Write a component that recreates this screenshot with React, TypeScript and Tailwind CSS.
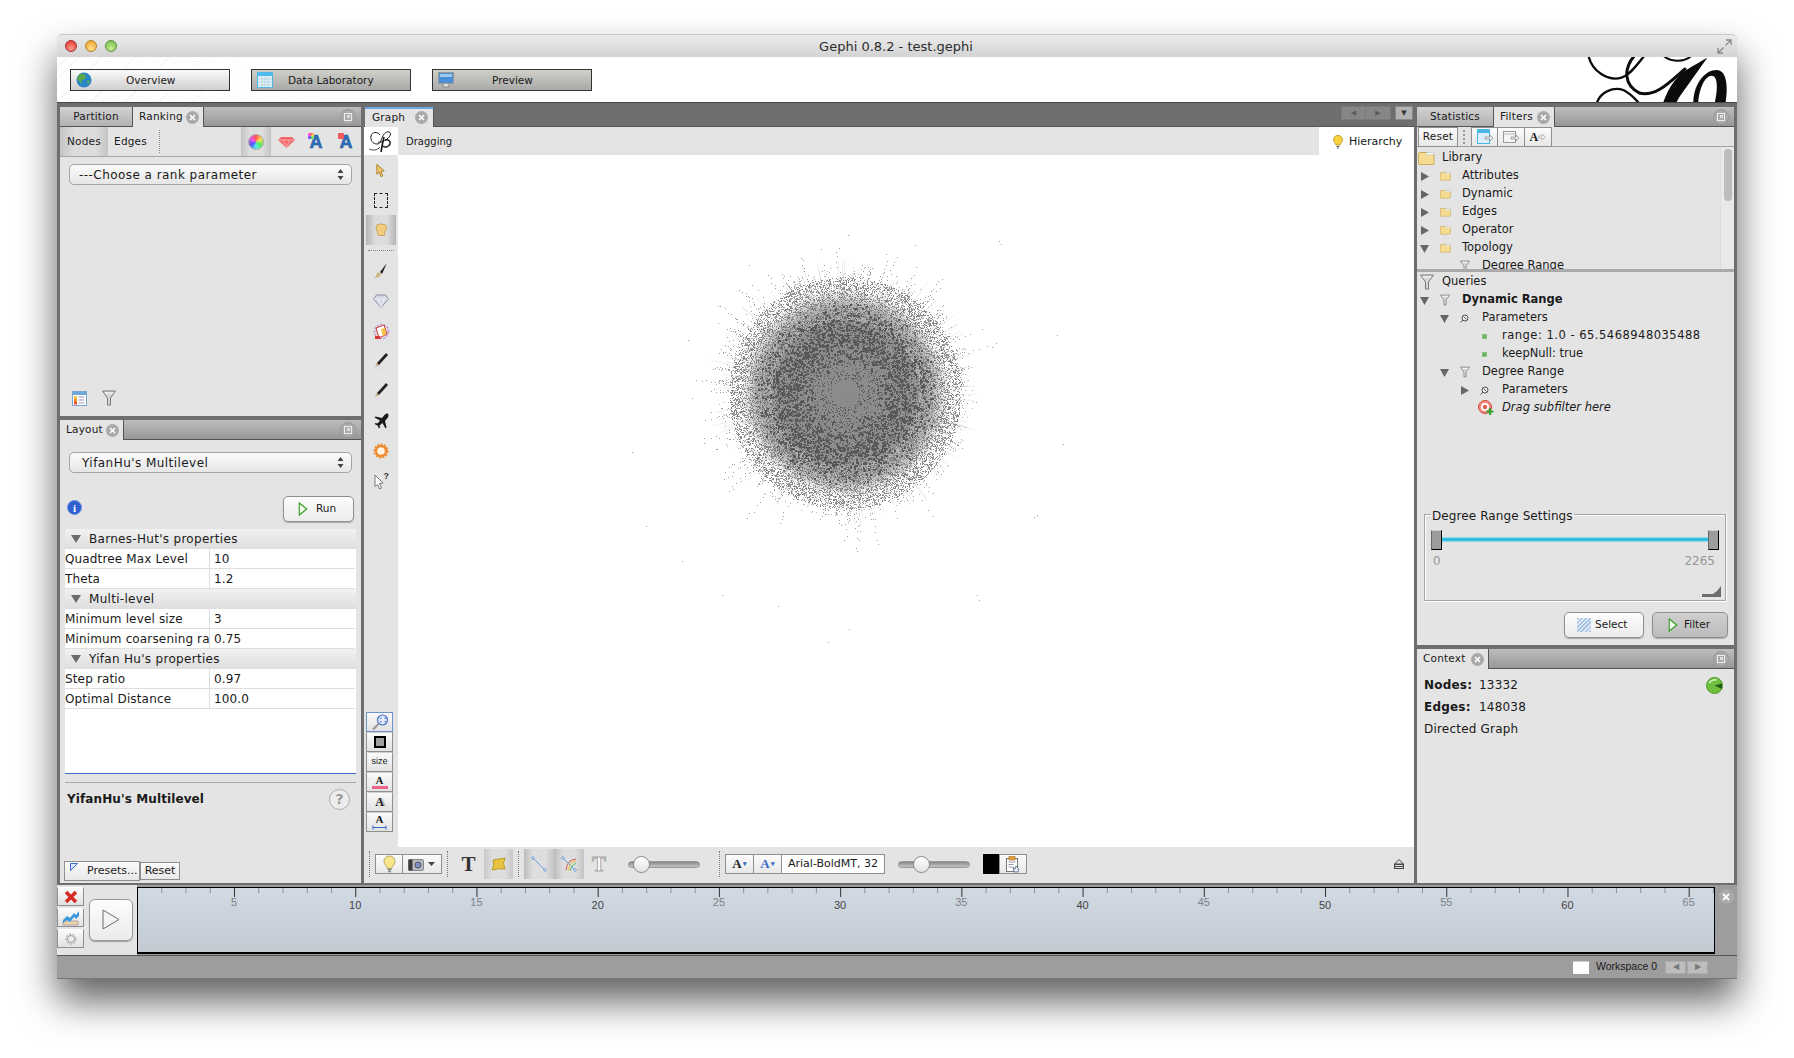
import React, { useMemo } from "react";

function rng(seed: number) {
  return () => {
    seed |= 0; seed = (seed + 0x6d2b79f5) | 0;
    let t = Math.imul(seed ^ (seed >>> 15), 1 | seed);
    t = (t + Math.imul(t ^ (t >>> 7), 61 | t)) ^ t;
    return ((t ^ (t >>> 14)) >>> 0) / 4294967296;
  };
}

function Cluster() {
  const data = useMemo(() => {
    const r = rng(42);
    const cx = 447, cy = 238;
    const px = (x: number, y: number, s = 1) => `M${Math.round(x)} ${Math.round(y)}h${s}v${s}h-${s}z`;
    let edges = "", mid = "", dark = "", light = "", spike = "", fringe = "";
    for (let i = 0; i < 1300; i++) {
      const a = r() * 6.283, r0 = 55 + r() * 35, r1 = 85 + r() * r() * 55;
      edges += `M${(cx + Math.cos(a) * r0).toFixed(1)} ${(cy + Math.sin(a) * r0).toFixed(1)}L${(cx + Math.cos(a) * r1).toFixed(1)} ${(cy + Math.sin(a) * r1).toFixed(1)}`;
    }
    for (let i = 0; i < 15000; i++) {
      const a = r() * 6.283, d = 116 * Math.pow(r(), 0.6);
      mid += px(cx + Math.cos(a) * d, cy + Math.sin(a) * d);
    }
    for (let i = 0; i < 5600; i++) {
      const a = r() * 6.283, d = 28 + (r() + r()) / 2 * 66;
      dark += px(cx + Math.cos(a) * d, cy + Math.sin(a) * d, r() > 0.7 ? 2 : 1);
    }
    for (let i = 0; i < 500; i++) {
      const a = r() * 6.283, d = 14 + r() * 22;
      dark += px(cx + Math.cos(a) * d, cy + Math.sin(a) * d);
    }
    for (let i = 0; i < 2600; i++) {
      const a = r() * 6.283, d = 78 + r() * r() * 42;
      fringe += px(cx + Math.cos(a) * d, cy + Math.sin(a) * d);
    }
    for (let i = 0; i < 6000; i++) {
      const a = r() * 6.283, d = 74 + r() * r() * 56;
      light += px(cx + Math.cos(a) * d, cy + Math.sin(a) * d);
    }
    for (let i = 0; i < 170; i++) {
      const a = r() * 6.283, n = 4 + Math.floor(r() * 9), st = 96 + r() * 16, len = 10 + r() * r() * 58;
      for (let j = 0; j < n; j++) {
        const d = st + (j / n) * len + r() * 3, b = a + (r() - 0.5) * 0.025;
        spike += px(cx + Math.cos(b) * d, cy + Math.sin(b) * d);
      }
    }
    const out = [[873,211],[875,213],[924,293],[929,388],[904,452],[906,450],[854,520],[856,524],[742,550],[724,561],[680,530],[631,520],[596,490],[565,460],[552,395],[601,297],[605,348],[741,205],[655,232],[800,214],[718,218]];
    let outliers = "";
    out.forEach(([x, y]) => { outliers += px(x * 1.1441 - 398, y * 1.1441 - 155); });
    return { edges, mid, dark, light, spike, outliers, fringe, cx, cy };
  }, []);
  return (
    <svg className="w-full h-full block" viewBox="0 0 1016 692" preserveAspectRatio="xMinYMin slice" shapeRendering="crispEdges">
      <defs>
        <radialGradient id="core">
          <stop offset="0" stopColor="#8c8c8c" />
          <stop offset="0.68" stopColor="#8e8e8e" />
          <stop offset="0.84" stopColor="#a6a6a6" stopOpacity="0.8" />
          <stop offset="1" stopColor="#c4c4c4" stopOpacity="0" />
        </radialGradient>
      </defs>
      <circle cx={data.cx} cy={data.cy} r={104} fill="url(#core)" shapeRendering="auto" />
      <path d={data.edges} stroke="#b0b0b0" strokeWidth={0.5} fill="none" opacity={0.4} shapeRendering="auto" />
      <path d={data.light} fill="#b4b4b4" />
      <path d={data.mid} fill="#8a8a8a" />
      <path d={data.fringe} fill="#7c7c7c" />
      <path d={data.spike} fill="#a0a0a0" />
      <path d={data.dark} fill="#585858" />
      <path d={data.outliers} fill="#a0a0a0" />
    </svg>
  );
}

const Close = () => (
  <span className="w-[13px] h-[13px] rounded-full bg-[#a9a9a9] flex items-center justify-center shrink-0">
    <svg width="7" height="7" viewBox="0 0 7 7"><path d="M1 1l5 5M6 1l-5 5" stroke="#fff" strokeWidth="1.6" /></svg>
  </span>
);

const Maxi = () => (
  <span className="w-[16px] h-[16px] rounded-full bg-[#a9a9a9] border border-[#989898] flex items-center justify-center">
    <span className="w-[8px] h-[8px] border border-[#eee] flex items-center justify-center"><span className="w-[3px] h-[3px] bg-[#ddd]" /></span>
  </span>
);

function TabBar({ children }: { children: React.ReactNode }) {
  return (
    <div className="h-[19px] shrink-0 flex items-stretch bg-[linear-gradient(#bdbdbd,#979797)] border-b border-[#555] box-content relative text-[10.500px] tracking-[0.2px]">
      {children}
      <div className="ml-auto mr-[5px] self-center"><Maxi /></div>
    </div>
  );
}

function ActiveTab({ label, w }: { label: string; w: string }) {
  return (
    <div className={`${w} bg-[#e4e4e4] border-r border-[#555] flex items-center justify-between pl-[6px] pr-[4px] -mb-px`}>
      <span>{label}</span><Close />
    </div>
  );
}

function IdleTab({ label, w }: { label: string; w: string }) {
  return (
    <div className={`${w} bg-[linear-gradient(#d2d2d2,#b2b2b2)] border-r border-[#555] flex items-center justify-center`}>{label}</div>
  );
}

function Select({ label, cls }: { label: string; cls: string }) {
  return (
    <div className={`h-[21px] border border-[#a5a5a5] rounded-[5px] bg-[linear-gradient(#fbfbfb,#e6e6e6)] flex items-center justify-between pr-[7px] text-[12px] tracking-[0.45px] ${cls}`}>
      <span>{label}</span>
      <svg width="7" height="13" viewBox="0 0 7 13"><path d="M3.5 1L6.5 5H.5zM3.5 12L.5 8h6z" fill="#444" /></svg>
    </div>
  );
}

const Tri = ({ open, size = 9 }: { open?: boolean; size?: number }) => (
  <svg width={size} height={size} viewBox="0 0 9 9" className="shrink-0">
    {open ? <path d="M0 1h9L4.5 9z" fill="#666" /> : <path d="M1 0l8 4.5L1 9z" fill="#666" />}
  </svg>
);

const Folder = ({ big }: { big?: boolean }) => (
  <svg width={big ? 17 : 11} height={big ? 14 : 10} viewBox="0 0 17 14" className="shrink-0">
    <path d="M.5 2.5q0-1 1-1h13q1.500 0 1.500 1.500v9.500q0 1-1 1h-13.500q-1 0-1-1z" fill="#f6dc92" stroke="#c9a95a" />
    <path d="M9 1.500h7v2H8z" fill="#fff" stroke="#a8c5e0" strokeWidth=".5" />
  </svg>
);

const Funnel = ({ big }: { big?: boolean }) => (
  <svg width={big ? 14 : 10} height={big ? 16 : 12} viewBox="0 0 14 16" className="shrink-0">
    <path d="M.5 1h13L8.500 8v7h-3V8z" fill="#d6d6d6" stroke="#7a7a7a" />
    <path d="M3 3h8" stroke="#fff" />
  </svg>
);

const Wrench = () => (
  <svg width="9" height="9" viewBox="0 0 9 9" className="shrink-0"><circle cx="5" cy="4" r="3" fill="#eee" stroke="#555" /><path d="M3 6L.5 8.500M3.500 2.500l3 3" stroke="#555" /></svg>
);

const Leaf = () => <span className="w-[5px] h-[5px] ml-[2px] bg-[#69b55d] border border-[#8ac482] shrink-0" />;

const pad = ["pl-[3px]", "pl-[23px]", "pl-[43px]"];

function Row({ level = 0, arrow, open, icon, children, cls = "" }: { level?: number; arrow?: boolean; open?: boolean; icon?: React.ReactNode; children: React.ReactNode; cls?: string }) {
  return (
    <div className={`h-[18px] flex items-center whitespace-nowrap text-[11.500px] ${pad[level]} ${cls}`}>
      <span className="w-[20px] shrink-0 flex items-center">{arrow && <Tri open={open} />}</span>
      <span className="w-[22px] shrink-0 flex items-center">{icon}</span>
      <span>{children}</span>
    </div>
  );
}

function PropHead({ label }: { label: string }) {
  return (
    <div className="h-[20px] bg-[linear-gradient(#f1f1f1,#dedede)] flex items-center pl-[6px] gap-[8px] tracking-[0.3px]">
      <svg width="10" height="8" viewBox="0 0 10 8"><path d="M0 0h10L5 8z" fill="#6d6d6d" /></svg>
      <span>{label}</span>
    </div>
  );
}

function PropRow({ k, v }: { k: string; v: string }) {
  return (
    <div className="h-[20px] grid grid-cols-[145px_1fr] bg-white border-b border-[#dedede] mr-[1px] tracking-[0.15px]">
      <div className="border-r border-[#dedede] overflow-hidden whitespace-nowrap leading-[20px]">{k}</div>
      <div className="pl-[4px] leading-[20px]">{v}</div>
    </div>
  );
}

function MacBtn({ children, cls }: { children: React.ReactNode; cls: string }) {
  return <div className={`rounded-[5px] border border-[#8f8f8f] shadow-[0_1px_1px_rgba(0,0,0,0.25)] flex items-center ${cls}`}>{children}</div>;
}

const PlayGreen = () => (
  <svg width="10" height="14" viewBox="0 0 12 15" preserveAspectRatio="none"><path d="M1.500 1l9 6.500-9 6.500z" fill="#f4faf0" stroke="#2f9a1c" strokeWidth="1.300" /></svg>
);

const Pencil = () => (
  <svg width="16" height="18" viewBox="0 0 16 18">
    <path d="M13 1l2 2-9 10-3.500 1.500L4 11z" fill="#222" />
    <path d="M4 11l2 2-3.500 1.500z" fill="#e8c58c" />
    <path d="M1 17h13" stroke="#ddd" />
  </svg>
);

const Brush = () => (
  <svg width="16" height="18" viewBox="0 0 16 18">
    <path d="M14 1L7 10l2 2z" fill="#222" />
    <path d="M6 10.500c-2 .5-3 2-2.500 3-.5 1-1.500 1.500-3 2 3 .5 6 0 7.500-3z" fill="#c9b27a" />
    <path d="M1 17h13" stroke="#ddd" />
  </svg>
);

function ToolCol() {
  return (
    <div className="w-[34px] shrink-0 flex flex-col items-center bg-[#e4e4e4] relative">
      <div className="h-[28px] w-full bg-white flex items-center justify-center">
        <svg width="26" height="25" viewBox="0 0 26 25" fill="none" stroke="#1a1a1a" strokeWidth="1">
          <path d="M12 6C9 2 4 3 3 7c-1 4 2 8 6 8 3 0 4-3 5-6 1-3 4-7 7-6 3 1 1 5-2 7-3 2-7 4-9 3" />
          <path d="M16 8c-1 4-2 9-3 15" strokeWidth="1.600" />
          <path d="M17 11c3-1 6 1 5 4s-5 4-7 2" strokeWidth="1.500" />
          <path d="M1 20c4 2 9 1 11-2" strokeWidth=".8" />
        </svg>
      </div>
      <div className="h-[30px] flex items-center justify-center">
        <svg width="10" height="15" viewBox="0 0 12 17"><path d="M1 1l9 8-4 .5L8 15l-2 1-2-5.500L1 13z" fill="#f0c566" stroke="#a07a25" /></svg>
      </div>
      <div className="h-[30px] flex items-center justify-center">
        <span className="w-[14px] h-[15px] border border-dashed border-[#222] rounded-[1px]" />
      </div>
      <div className="h-[30px] w-[30px] flex items-center justify-center bg-[linear-gradient(90deg,#b4b4b4,#dcdcdc_30%,#dcdcdc_70%,#b4b4b4)]">
        <svg width="14" height="14" viewBox="0 0 14 14"><path d="M2 3q1-2 3-1.500Q7 0 9 1.500q3-.5 3.500 2 .5 3-1.500 5l-.5 4H4L3.500 9Q2 7 2 3z" fill="#f2cd7e" stroke="#b0883a" strokeWidth=".6" /></svg>
      </div>
      <div className="w-[26px] border-t border-dotted border-[#888] mt-[5px] mb-[5px]" />
      <div className="h-[30px] flex items-center justify-center"><Brush /></div>
      <div className="h-[30px] flex items-center justify-center">
        <svg width="16" height="14" viewBox="0 0 16 14"><path d="M3.500 1h9L15.500 5 8 13.500.5 5z" fill="#d3d8e4" stroke="#8b8fa0" /><path d="M1 5h14M5 5l3 8 3-8" stroke="#f5f5f5" strokeWidth=".8" fill="none" /></svg>
      </div>
      <div className="h-[30px] flex items-center justify-center">
        <svg width="17" height="17" viewBox="0 0 17 17">
          <circle cx="8.500" cy="8.500" r="7" fill="none" stroke="#c8a0d8" strokeWidth="2" strokeDasharray="2 1.500" />
          <path d="M3 5l8-3 3 9-8 4z" fill="#fff" stroke="#c33" />
          <path d="M8 6l4-1 1 6-3 2z" fill="#f4c13e" />
          <path d="M2 13h5v3H2z" fill="#d33" />
        </svg>
      </div>
      <div className="h-[30px] flex items-center justify-center"><Pencil /></div>
      <div className="h-[30px] flex items-center justify-center"><Pencil /></div>
      <div className="h-[30px] flex items-center justify-center">
        <svg width="15" height="16" viewBox="0 0 15 16"><path d="M14 1c-1-1-2.500 0-3.500 1L8 5 1.500 3.500.5 4.500 6 7.500 3.500 10.500 1.500 10l-1 1 3 1.500 1.500 3 1-1-.5-2L8.500 10l3 5.500 1-1L11 8l2.500-3c1-1 1.500-3 .5-4z" fill="#1a1a1a" /></svg>
      </div>
      <div className="h-[30px] flex items-center justify-center">
        <svg width="16" height="16" viewBox="0 0 16 16"><circle cx="8" cy="8" r="5" fill="#fff2e0" stroke="#f08a2c" strokeWidth="2.400" /><circle cx="8" cy="8" r="6.800" fill="none" stroke="#f08a2c" strokeWidth="1.500" strokeDasharray="2 1.500" /></svg>
      </div>
      <div className="h-[30px] flex items-center justify-center">
        <svg width="15" height="18" viewBox="0 0 15 18"><path d="M1 3l8 8-3.500.5L7.500 16l-2 1-2-4.500L1 14.500z" fill="#fff" stroke="#777" /><text x="9.500" y="7" fontSize="9" fontWeight="700" fill="#333" fontFamily="'Liberation Sans',sans-serif">?</text></svg>
      </div>
      <div className="flex-1" />
      <div className="flex flex-col mb-[15px] w-[27px] mr-[3px]">
        <SmallTool active><svg width="18" height="17" viewBox="0 0 18 17"><circle cx="11.500" cy="6" r="5" fill="#dfe9fb" stroke="#4a72c4" strokeWidth="1.200" /><path d="M8 9.500L2 15.500" stroke="#999" strokeWidth="2.200" /><path d="M9.500 5V4h1M13.500 4h1v1M14.500 7v1h-1M10.500 8h-1V7" stroke="#3a5eb0" fill="none" strokeWidth=".8" /></svg></SmallTool>
        <SmallTool><span className="w-[12px] h-[12px] border-2 border-black bg-[#a0a0a0] block" /></SmallTool>
        <SmallTool><span className="text-[9px] font-['Liberation_Sans',sans-serif]">size</span></SmallTool>
        <SmallTool><div className="flex flex-col items-center leading-[10px]"><span className="font-['Liberation_Serif',serif] text-[11px] font-bold leading-[11px]">A</span><span className="w-[16px] h-[3px] bg-[#ec6488]" /></div></SmallTool>
        <SmallTool><span className="font-['Liberation_Serif',serif] text-[12px] font-bold [text-shadow:2px_0_1px_#bbb]">A</span></SmallTool>
        <SmallTool><div className="flex flex-col items-center"><span className="font-['Liberation_Serif',serif] text-[11px] font-bold leading-[11px]">A</span><svg width="15" height="5" viewBox="0 0 15 5"><path d="M1 2.500h13M1 .5v4M14 .5v4" stroke="#3767c9" /></svg></div></SmallTool>
      </div>
    </div>
  );
}

function SmallTool({ children, active }: { children: React.ReactNode; active?: boolean }) {
  return <div className={`h-[20px] border ${active ? "border-[#6d93c9]" : "border-[#8f8f8f] border-t-[#cfcfcf]"} bg-[linear-gradient(#fafafa,#e2e2e2)] flex items-center justify-center`}>{children}</div>;
}

const VDots = ({ cls = "" }: { cls?: string }) => <span className={`h-[26px] border-l border-dotted border-[#777] ${cls}`} />;

function Slider({ pos }: { pos: string }) {
  return (
    <div className="w-[72px] h-[7px] rounded-full bg-[linear-gradient(#888,#c6c6c6)] border border-[#999] relative">
      <span className={`absolute top-[-6px] w-[17px] h-[17px] rounded-full border border-[#888] bg-[linear-gradient(#fff,#e2e2e2)] ${pos}`} />
    </div>
  );
}

function BoxBtn({ children, cls = "" }: { children: React.ReactNode; cls?: string }) {
  return <div className={`h-[20px] border border-[#8f8f8f] bg-[linear-gradient(#fbfbfb,#e8e8e8)] flex items-center justify-center ${cls}`}>{children}</div>;
}

function BottomBar() {
  return (
    <div className="h-[36px] shrink-0 bg-[#e4e4e4] flex items-center pl-[5px] pb-[2px] text-[11px]">
      <VDots />
      <BoxBtn cls="w-[28px] ml-[5px]">
        <svg width="13" height="18" viewBox="0 0 13 18"><path d="M6.500 1C3 1 1 3.500 1 6.500c0 2.500 2.500 4 3.500 7h4c1-3 3.500-4.500 3.500-7C12 3.500 10 1 6.500 1z" fill="#f7e58a" stroke="#b9a969" /><path d="M4.500 14.500h4M5 16.500h3" stroke="#888" strokeWidth="1.300" /></svg>
      </BoxBtn>
      <BoxBtn cls="w-[39px] border-l-0 gap-[4px] pr-[1px]">
        <svg width="16" height="13" viewBox="0 0 16 13"><rect x=".5" y="1.500" width="15" height="11" rx="1" fill="#b9b9c2" stroke="#888" /><rect x=".5" y="1.500" width="4" height="11" fill="#3a3a3a" /><circle cx="10" cy="7" r="3" fill="#7a8fc4" stroke="#555" /></svg>
        <svg width="7" height="4" viewBox="0 0 7 4"><path d="M0 0h7L3.500 4z" fill="#444" /></svg>
      </BoxBtn>
      <VDots cls="ml-[5px]" />
      <span className="w-[36px] pl-[5px] flex justify-center font-['Liberation_Serif',serif] font-bold text-[21px] leading-none text-[#333]">T</span>
      <span className="w-[29px] h-[30px] bg-[linear-gradient(90deg,#c8c8c8,#dedede_30%,#dedede_70%,#c8c8c8)] flex items-center justify-center">
        <svg width="17" height="15" viewBox="0 0 17 15"><path d="M3 3q6-1 12-2-3 5 0 11-6-1-13 1 3-5 1-10z" fill="#e8c43e" stroke="#b99b2a" /></svg>
      </span>
      <VDots cls="ml-[5px]" />
      <span className="ml-[5px] w-[30px] h-[30px] bg-[linear-gradient(90deg,#bcbcbc,#dedede_30%,#dedede_70%,#c4c4c4)] flex items-center justify-center">
        <svg width="16" height="16" viewBox="0 0 16 16"><path d="M2 2l12 12" stroke="#6fa0d8" /><circle cx="2" cy="2" r="1.300" fill="#fff" stroke="#6fa0d8" /><circle cx="14" cy="14" r="1.300" fill="#fff" stroke="#6fa0d8" /></svg>
      </span>
      <span className="w-[30px] h-[30px] bg-[linear-gradient(90deg,#bcbcbc,#dedede_30%,#dedede_70%,#c4c4c4)] flex items-center justify-center">
        <svg width="16" height="16" viewBox="0 0 16 16"><path d="M5 14Q6 4 15 3" stroke="#d8574a" fill="none" strokeWidth="1" /><path d="M7 15Q8 6 15 5" stroke="#e9c43c" fill="none" strokeWidth="1" /><path d="M9 15q1-6 6-8" stroke="#5fb85a" fill="none" strokeWidth="1" /><path d="M2 2l12 12" stroke="#6fa0d8" /><circle cx="2" cy="2" r="1.300" fill="#fff" stroke="#6fa0d8" /><circle cx="14" cy="14" r="1.300" fill="#fff" stroke="#6fa0d8" /></svg>
      </span>
      <span className="w-[30px] flex justify-center font-['Liberation_Serif',serif] font-bold text-[21px] leading-none text-white [-webkit-text-stroke:1px_#aaa]">T</span>
      <div className="ml-[14px]"><Slider pos="left-[4px]" /></div>
      <VDots cls="ml-[19px]" />
      <BoxBtn cls="w-[29px] ml-[5px] font-['Liberation_Serif',serif] font-bold text-[13px]">A<span className="text-[7px] text-[#3767c9] ml-[1px]">▾</span></BoxBtn>
      <BoxBtn cls="w-[28px] border-l-0 font-['Liberation_Serif',serif] font-bold text-[13px] text-[#3767c9]">A<span className="text-[7px] ml-[1px]">▾</span></BoxBtn>
      <BoxBtn cls="w-[103px] border-l-0 bg-[linear-gradient(#fff,#fff)] whitespace-nowrap text-[11px]">Arial-BoldMT, 32</BoxBtn>
      <div className="ml-[13px]"><Slider pos="left-[14px]" /></div>
      <span className="w-[16px] h-[20px] bg-black ml-[13px]" />
      <BoxBtn cls="w-[28px]">
        <svg width="16" height="17" viewBox="0 0 16 17"><rect x="1.500" y="2.500" width="11" height="13" fill="#fff" stroke="#777" /><rect x="4" y=".5" width="6" height="3.500" fill="#e8a43c" stroke="#a06a20" strokeWidth=".6" /><path d="M3.500 6h7M3.500 8.500h5M3.500 11h4" stroke="#99a" /><path d="M9 16l-1-5 2 2 1-3 3 3-1 3z" fill="#dfe8f8" stroke="#456" strokeWidth=".7" /></svg>
      </BoxBtn>
      <div className="ml-auto mr-[10px]">
        <svg width="10" height="10" viewBox="0 0 10 10"><path d="M5 .5L9.500 5H.5z" fill="none" stroke="#444" /><rect x=".5" y="5.500" width="9" height="4" fill="none" stroke="#444" /><path d="M1 7.500h8" stroke="#444" /></svg>
      </div>
    </div>
  );
}

function Ruler() {
  const ticks = [];
  for (let v = 2; v <= 66; v++) {
    const x = 96.5 + (v - 5) * 24.245;
    const major = v % 5 === 0;
    ticks.push(<line key={v} x1={x} x2={x} y1={0} y2={major ? 9 : 5} stroke={major ? "#333" : "#8a8f98"} />);
    if (major) {
      const ten = v % 10 === 0;
      ticks.push(<text key={`t${v}`} x={x - 0.5} y={ten ? 21 : 18} textAnchor="middle" fontSize={11} fill={ten ? "#444" : "#7d838c"} fontFamily="'Liberation Sans',sans-serif">{v}</text>);
    }
  }
  return (
    <svg className="block" width="1576" height="63">{ticks}</svg>
  );
}

export default function App() {
  return (
    <div className="w-[1794px] h-[1058px] bg-white overflow-hidden pt-[34px] pl-[57px] font-['DejaVu_Sans',sans-serif] text-[12px] text-[#1a1a1a]">
      <div className="w-[1680px] h-[945px] flex flex-col rounded-t-[5px] shadow-[0_22px_38px_rgba(0,0,0,0.62)]">
        <div className="h-[23px] shrink-0 rounded-t-[5px] bg-[linear-gradient(#ebebeb,#d3d3d3)] border-t border-[#c8c8c8] flex items-center pl-[8px] pr-[5px] relative">
          <div className="flex gap-[8px]">
            <span className="w-[12px] h-[12px] rounded-full border border-[#a33] bg-[radial-gradient(circle_at_50%_75%,#ff9c8c,#dd2b25)]" />
            <span className="w-[12px] h-[12px] rounded-full border border-[#b7832c] bg-[radial-gradient(circle_at_50%_75%,#ffe08a,#e89a22)]" />
            <span className="w-[12px] h-[12px] rounded-full border border-[#5d9141] bg-[radial-gradient(circle_at_50%_75%,#c9ee95,#6bb63f)]" />
          </div>
          <div className="flex-1 text-center text-[13px] text-[#2b2b2b] pr-[42px] pt-[1px]">Gephi 0.8.2 - test.gephi</div>
          <svg width="15" height="15" viewBox="0 0 15 15"><path d="M9 1h5v5M14 1L8.500 6.500" stroke="#888" fill="none" strokeWidth="1.300" /><path d="M6 14H1V9M1 14l5.500-5.500" stroke="#888" fill="none" strokeWidth="1.300" /></svg>
        </div>

        <div className="h-[45px] shrink-0 flex items-center pl-[13px] gap-[21px] relative overflow-hidden bg-[linear-gradient(90deg,rgba(255,255,255,0),#fff_16%),repeating-linear-gradient(135deg,#fff,#fff_7px,#e9e9e9_8px)] text-[10.500px]">
          <div className="w-[160px] h-[22px] border border-[#333] bg-[linear-gradient(#fafafa,#cfcfcf)] flex items-center relative">
            <svg className="ml-[5px]" width="16" height="16" viewBox="0 0 16 16"><circle cx="8" cy="8" r="7.500" fill="#2a86c8" /><path d="M4 2q4-1 6 2l-1 3-3 1-1 4-2-3-2-2q0-3 3-5z" fill="#59a84e" /><path d="M11 8l3 1-2 4z" fill="#59a84e" /></svg>
            <span className="absolute left-[55px] top-[3px]">Overview</span>
          </div>
          <div className="w-[160px] h-[22px] border border-[#333] bg-[linear-gradient(#d0d0c8,#a9a9a9)] flex items-center relative">
            <svg className="ml-[5px]" width="16" height="16" viewBox="0 0 16 16"><rect x=".5" y=".5" width="15" height="15" fill="#dff1fb" stroke="#54b7e8" /><rect x="1" y="1" width="14" height="3" fill="#4dbbef" /><path d="M1 7h14M1 10h14M1 13h14M5 4v11M8 4v11M11 4v11" stroke="#b6cfdc" strokeWidth=".7" /></svg>
            <span className="absolute left-[36px] top-[3px]">Data Laboratory</span>
          </div>
          <div className="w-[160px] h-[22px] border border-[#333] bg-[linear-gradient(#d0d0c8,#a9a9a9)] flex items-center relative">
            <svg className="ml-[5px]" width="16" height="16" viewBox="0 0 16 16"><rect x=".5" y=".5" width="15" height="11" fill="#4a8fd6" stroke="#9a9a9a" /><rect x="2" y="2" width="12" height="3" fill="#9ac8f0" /><path d="M5 12v3h6v-3" fill="#ddd" stroke="#888" /></svg>
            <span className="absolute left-[59px] top-[3px]">Preview</span>
          </div>
          <svg className="absolute right-0 top-0" width="157" height="45" viewBox="0 6 471 135">
            <g fill="none" stroke="#0b0b0b" strokeLinecap="round">
              <path d="M25 0C35 50 85 80 125 68C150 60 170 30 192 4" strokeWidth="7" />
              <path d="M165 0C130 40 130 90 180 115C230 125 270 80 315 42" strokeWidth="9" />
              <path d="M250 2C270 20 310 25 335 2" strokeWidth="6" />
              <path d="M50 146C60 110 100 95 130 105C150 115 165 130 178 146" strokeWidth="7" />
            </g>
            <path d="M250 141C265 100 285 70 310 50C330 38 360 20 382 8C370 25 345 60 320 95C305 115 295 130 290 141Z" fill="#0b0b0b" />
            <path d="M340 141C342 85 375 45 410 45C440 45 445 95 437 141L405 141C415 95 412 62 395 62C375 62 358 100 355 141Z" fill="#0b0b0b" />
          </svg>
        </div>

        <div className="h-[783px] shrink-0 bg-[#6e6e6e] border-t border-[#444] flex pt-[4px] pb-[2px] px-[3px]">
          <div className="w-[301px] shrink-0 flex flex-col gap-[4px]">
            <section className="h-[309px] bg-[#e4e4e4] flex flex-col">
              <TabBar>
                <IdleTab label="Partition" w="w-[73px]" />
                <ActiveTab label="Ranking" w="w-[71px]" />
              </TabBar>
              <div className="h-[30px] flex items-stretch border-b border-[#a8a8a8] text-[10.500px] tracking-[0.2px]">
                <div className="w-[48px] flex items-center justify-center bg-[linear-gradient(90deg,#c4c4c4,#dcdcdc_30%,#dcdcdc_75%,#c4c4c4)]">Nodes</div>
                <div className="w-[45px] flex items-center justify-center">Edges</div>
                <span className="my-[3px] ml-[6px] border-l border-dotted border-[#888]" />
                <div className="ml-[81px] w-[30px] flex items-center justify-center bg-[linear-gradient(90deg,#c4c4c4,#dedede_30%,#dedede_70%,#c4c4c4)]">
                  <span className="w-[16px] h-[16px] rounded-full bg-[conic-gradient(#f55,#fd5,#5e5,#5ee,#55f,#e5e,#f55)] border border-[#aaa]" />
                </div>
                <div className="w-[30px] flex items-center justify-center">
                  <svg width="17" height="12" viewBox="0 0 17 12"><path d="M3 1h11l3 3-8.500 8L0 4z" fill="#f2686a" /><path d="M1 4h15M5 4l3.500 7L12 4" stroke="#fbb" fill="none" strokeWidth=".8" /></svg>
                </div>
                <Letter />
                <Letter red />
              </div>
              <Select label="---Choose a rank parameter" cls="mx-[9px] mt-[7px] pl-[9px]" />
              <div className="mt-auto mb-[10px] ml-[12px] flex gap-[15px] items-center">
                <svg width="15" height="15" viewBox="0 0 15 15"><rect x=".5" y=".5" width="14" height="14" fill="#fff" stroke="#7ba5d0" /><rect x="1" y="1" width="13" height="3" fill="#6ea8dc" /><rect x="2" y="5" width="3" height="3" fill="#f5c33b" /><rect x="2" y="8" width="3" height="3" fill="#f08c28" /><rect x="2" y="11" width="3" height="2.500" fill="#e8502a" /><path d="M6.500 6h6M6.500 9h6M6.500 12h6" stroke="#99b" /></svg>
                <Funnel big />
              </div>
            </section>

            <section className="flex-1 bg-[#e4e4e4] flex flex-col">
              <TabBar>
                <ActiveTab label="Layout" w="w-[64px]" />
              </TabBar>
              <Select label="YifanHu's Multilevel" cls="mx-[9px] mt-[12px] pl-[12px]" />
              <div className="flex items-center justify-between pl-[7px] pr-[7px] mt-[22px] h-[27px]">
                <svg className="-mt-[3px]" width="15" height="15" viewBox="0 0 15 15"><circle cx="7.500" cy="7.500" r="7" fill="#2f5fd0" stroke="#6f93dd" /><text x="7.500" y="11.500" textAnchor="middle" fontSize="11" fontWeight="700" fill="#fff" fontFamily="'Liberation Serif',serif">i</text></svg>
                <MacBtn cls="w-[71px] h-[26px] bg-[linear-gradient(#fcfcfc,#ececec)] gap-[8px] pl-[14px]"><PlayGreen /><span className="text-[10.500px]">Run</span></MacBtn>
              </div>
              <div className="mx-[5px] mt-[7px] h-[245px] bg-white border-b border-[#3a6cc4] flex flex-col">
                <PropHead label="Barnes-Hut's properties" />
                <PropRow k="Quadtree Max Level" v="10" />
                <PropRow k="Theta" v="1.2" />
                <PropHead label="Multi-level" />
                <PropRow k="Minimum level size" v="3" />
                <PropRow k="Minimum coarsening ra" v="0.75" />
                <PropHead label="Yifan Hu's properties" />
                <PropRow k="Step ratio" v="0.97" />
                <PropRow k="Optimal Distance" v="100.0" />
              </div>
              <div className="mx-[5px] mt-[8px] border-t border-[#a8a8a8] flex items-center justify-between h-[33px] pl-[2px] pr-[6px]">
                <span className="font-bold text-[12px] tracking-[0.1px]">YifanHu's Multilevel</span>
                <span className="w-[21px] h-[21px] rounded-full border border-[#aaa] bg-[#ededed] text-[#9a9a9a] text-[14px] font-bold flex items-center justify-center">?</span>
              </div>
              <div className="mt-auto mb-[2px] ml-[4px] flex items-center text-[11px]">
                <div className="relative w-[76px] h-[20px] border border-[#8f8f8f] bg-[linear-gradient(#fbfbfb,#e8e8e8)] flex items-center pl-[22px] pt-[1px]">
                  <svg className="absolute left-[5px] top-[1px]" width="8" height="8" viewBox="0 0 8 8"><path d="M.5.5h7l-7 7z" fill="#dbe6f7" stroke="#3a6cc4" /></svg>
                  Presets...
                </div>
                <div className="w-[40px] h-[18px] border border-[#8f8f8f] bg-[linear-gradient(#fbfbfb,#e8e8e8)] flex items-center justify-center pt-[1px]">Reset</div>
              </div>
            </section>
          </div>

          <div className="w-[1050px] ml-[3px] shrink-0 flex flex-col">
            <div className="h-[19px] shrink-0 flex border-b border-[#555] box-content pl-[1px] relative text-[10.500px] tracking-[0.2px]">
              <div className="w-[69px] bg-[#e4e4e4] border-t-2 border-t-[#6da6e3] border-r border-[#555] flex items-center justify-between pl-[7px] pr-[5px] pb-[1px] -mb-px">
                <span>Graph</span><Close />
              </div>
              <div className="ml-auto mr-[1px] flex items-start mt-[-1px]">
                <span className="w-[25px] h-[14px] bg-[#868686] border border-[#7a7a7a] text-[7px] text-[#5c5c5c] flex items-center justify-center">◀</span>
                <span className="w-[25px] h-[14px] bg-[#868686] border border-[#7a7a7a] border-l-0 text-[7px] text-[#5c5c5c] flex items-center justify-center">▶</span>
                <span className="w-[18px] h-[14px] ml-[4px] bg-[#b2b2b2] border border-[#888] text-[7px] text-[#333] flex items-center justify-center">▼</span>
              </div>
            </div>
            <div className="flex-1 flex min-h-0">
              <ToolCol />
              <div className="flex-1 flex flex-col min-w-0">
                <div className="h-[28px] shrink-0 bg-[#e4e4e4] flex items-stretch pl-[8px] text-[10px] justify-between">
                  <span className="self-center">Dragging</span>
                  <span className="w-[95px] bg-white flex items-center gap-[6px] text-[11px] pl-[14px] pt-[2px]">
                    <svg width="10" height="14" viewBox="0 0 10 14"><path d="M5 .5C2 .5.5 2.500.5 4.800c0 2 1.800 3 2.500 5.200h4C7.700 7.800 9.500 6.800 9.500 4.800 9.500 2.500 8 .5 5 .5z" fill="#f8d23c" stroke="#c2a030" /><path d="M3.500 11.500h3M4 13h2" stroke="#666" /></svg>
                    Hierarchy
                  </span>
                </div>
                <div className="flex-1 bg-white min-h-0"><Cluster /></div>
              </div>
            </div>
            <BottomBar />
          </div>

          <div className="w-[317px] shrink-0 ml-[3px] flex flex-col gap-[4px]">
            <section className="h-[538px] bg-[#e4e4e4] flex flex-col relative">
              <TabBar>
                <IdleTab label="Statistics" w="w-[77px]" />
                <ActiveTab label="Filters" w="w-[61px]" />
              </TabBar>
              <div className="h-[20px] shrink-0 flex items-center border-b border-[#a0a0a0] pl-[1px] text-[10.500px] tracking-[0.2px]">
                <BoxBtn cls="w-[40px] h-[18px]">Reset</BoxBtn>
                <span className="h-[14px] ml-[5px] mr-[6px] border-l-2 border-dotted border-[#999]" />
                <BoxBtn cls="w-[27px] h-[19px]"><svg width="16" height="15" viewBox="0 0 16 15"><rect x=".5" y=".5" width="12" height="14" fill="#def" stroke="#4db4e8" /><rect x="1" y="1" width="11" height="3" fill="#4db4e8" /><path d="M8 8h5V6l3 3-3 3v-2H8z" fill="#eee" stroke="#888" strokeWidth=".7" /></svg></BoxBtn>
                <BoxBtn cls="w-[27px] h-[19px] border-l-0"><svg width="16" height="14" viewBox="0 0 16 14"><rect x=".5" y="1.500" width="12" height="11" fill="#f4f4f4" stroke="#999" /><path d="M1 4h11" stroke="#bbb" /><path d="M8 7h5V5l3 3-3 3V9H8z" fill="#eee" stroke="#888" strokeWidth=".7" /></svg></BoxBtn>
                <BoxBtn cls="w-[27px] h-[19px] border-l-0 font-['Liberation_Serif',serif] font-bold text-[12px]">A<svg width="8" height="8" viewBox="0 0 8 8"><path d="M0 3h4V1l3.500 3L4 7V5H0z" fill="#eee" stroke="#999" strokeWidth=".6" /></svg></BoxBtn>
              </div>
              <div className="h-[122px] shrink-0 overflow-hidden relative pt-[2px]">
                <Row icon={<Folder big />} cls="-ml-[2px] [&>span:first-child]:w-0 [&>span:nth-child(2)]:w-[24px]">Library</Row>
                <Row arrow icon={<Folder />}>Attributes</Row>
                <Row arrow icon={<Folder />}>Dynamic</Row>
                <Row arrow icon={<Folder />}>Edges</Row>
                <Row arrow icon={<Folder />}>Operator</Row>
                <Row arrow open icon={<Folder />}>Topology</Row>
                <Row level={1} icon={<Funnel />}>Degree Range</Row>
                <div className="absolute right-0 top-0 bottom-0 w-[14px] bg-[#e9e9e9] border-l border-[#ddd]">
                  <span className="absolute left-[3px] top-[2px] w-[8px] h-[52px] rounded-full bg-[#bcbcbc]" />
                </div>
              </div>
              <div className="h-[3px] shrink-0 bg-[#a9a9a9]" />
              <div className="pt-[1px]">
                <Row icon={<Funnel big />} cls="[&>span:first-child]:w-0 [&>span:nth-child(2)]:w-[22px]">Queries</Row>
                <Row arrow open icon={<Funnel />}><b className="font-bold">Dynamic Range</b></Row>
                <Row level={1} arrow open icon={<Wrench />}>Parameters</Row>
                <Row level={2} icon={<Leaf />} cls="tracking-[0.5px]">range: 1.0 - 65.5468948035488</Row>
                <Row level={2} icon={<Leaf />}>keepNull: true</Row>
                <Row level={1} arrow open icon={<Funnel />}>Degree Range</Row>
                <Row level={2} arrow icon={<Wrench />}>Parameters</Row>
                <Row level={2} icon={
                  <svg width="16" height="16" viewBox="0 0 16 16" className="-ml-[2px]"><circle cx="7" cy="7" r="6.500" fill="#f58a80" stroke="#d24a3e" /><circle cx="7" cy="7" r="4" fill="#fff" /><circle cx="7" cy="7" r="2.200" fill="#e25c50" /><path d="M12 8v7M8.500 11.500h7" stroke="#33a52f" strokeWidth="2.200" /></svg>
                }><i>Drag subfilter here</i></Row>
              </div>
              <div className="absolute left-[7px] right-[8px] top-[407px] h-[87px] border border-[#a5a5a5] shadow-[1px_1px_0_#fff,inset_1px_1px_0_#fff]">
                <span className="absolute left-[6px] -top-[6px] bg-[#e4e4e4] px-[1px] leading-[15px] whitespace-nowrap tracking-[0.1px]">Degree Range Settings</span>
                <div className="mx-[6px] mt-[15px] h-[20px] flex items-center relative">
                  <span className="absolute inset-x-[6px] top-[7px] h-[5px] bg-[linear-gradient(#9ee3f2,#18b4d8,#9ee3f2)]" />
                  <span className="relative w-[11px] h-[20px] bg-[#9c9c9c] border-r border-b border-black border-l border-l-[#666] border-t border-t-[#ccc]" />
                  <span className="relative ml-auto w-[11px] h-[20px] bg-[#9c9c9c] border-r border-b border-black border-l border-l-[#666] border-t border-t-[#ccc]" />
                </div>
                <div className="flex justify-between ml-[8px] mr-[10px] mt-[2px] text-[#999] text-[12px]"><span>0</span><span>2265</span></div>
                <svg className="absolute right-[3px] bottom-[2px]" width="20" height="12" viewBox="0 0 20 12"><path d="M0 11h19V0l-4 5-4 3H0z" fill="#444" opacity=".75" /></svg>
              </div>
              <div className="mt-auto mb-[7px] flex justify-end gap-[8px] pr-[6px] text-[10.500px]">
                <MacBtn cls="w-[80px] h-[26px] bg-[linear-gradient(#fdfdfd,#ececec)] gap-[4px] pl-[12px]">
                  <span className="w-[14px] h-[14px] bg-[repeating-linear-gradient(135deg,#a5c0e0,#a5c0e0_1px,#e4edf7_2px,#e4edf7_3px)]" /><span>Select</span>
                </MacBtn>
                <MacBtn cls="w-[76px] h-[26px] bg-[linear-gradient(#cfcfcf,#bcbcbc)] gap-[6px] pl-[15px]"><PlayGreen /><span>Filter</span></MacBtn>
              </div>
            </section>

            <section className="flex-1 bg-[#e4e4e4] flex flex-col">
              <TabBar>
                <ActiveTab label="Context" w="w-[72px]" />
              </TabBar>
              <div className="pl-[7px] pr-[8px] pt-[5px] text-[12px] tracking-[0.2px] relative">
                <div className="h-[22px] flex items-center"><b className="w-[55px]">Nodes:</b>13332</div>
                <div className="h-[22px] flex items-center"><b className="w-[55px]">Edges:</b>148038</div>
                <div className="h-[22px] flex items-center">Directed Graph</div>
                <svg className="absolute right-[11px] top-[8px]" width="17" height="17" viewBox="0 0 17 17"><circle cx="8.500" cy="8.500" r="8" fill="#6fbf3f" stroke="#4e9a2d" /><path d="M8.500 8.500L16 6.500 16 12z" fill="#1d5d16" /><path d="M3 6q3-4 8-3" stroke="#cdeeb0" fill="none" strokeWidth="1.500" /></svg>
              </div>
            </section>
          </div>
        </div>

        <div className="h-[70px] shrink-0 flex bg-[#9d9d9d]">
          <div className="w-[80px] shrink-0 bg-[#e4e4e4] flex items-center">
            <div className="flex flex-col gap-[2px] -mt-[5px]">
              <SmallStrip><svg width="14" height="14" viewBox="0 0 14 14"><path d="M2 2l10 10M12 2L2 12" stroke="#d62a1e" strokeWidth="3.500" /></svg></SmallStrip>
              <SmallStrip><svg width="18" height="16" viewBox="0 0 18 16"><path d="M1 11h15v4H1z" fill="#e8d5b0" stroke="#a88" strokeWidth=".7" /><path d="M1 10l4-4 3 2 4-5 2 2 3-4v5l-3 3-2-2-4 5-3-2-4 3z" fill="#3d97db" /></svg></SmallStrip>
              <SmallStrip><svg width="12" height="12" viewBox="0 0 12 12"><circle cx="6" cy="6" r="3.500" fill="#eee" stroke="#999" /><circle cx="6" cy="6" r="5" fill="none" stroke="#999" strokeDasharray="2 1.500" /></svg></SmallStrip>
            </div>
            <div className="ml-[5px] w-[44px] h-[42px] -mt-[1px] rounded-[6px] border border-[#999] bg-[linear-gradient(#fdfdfd,#ebebeb)] shadow-[0_1px_1px_rgba(0,0,0,0.3)] flex items-center justify-center">
              <svg width="18" height="21" viewBox="0 0 18 21"><path d="M1 1l16 9.500L1 20z" fill="#f3f3f3" stroke="#6c6c6c" /></svg>
            </div>
          </div>
          <div className="w-[1578px] h-[67px] shrink-0 border border-black border-b-2 bg-[linear-gradient(#d1d9e3,#c3cad2)] overflow-hidden mt-[2px]">
            <Ruler />
          </div>
          <div className="flex-1 flex justify-center pt-[4px]">
            <span className="w-[15px] h-[15px] rounded-full bg-[#aaa] flex items-center justify-center">
              <svg width="8" height="8" viewBox="0 0 8 8"><path d="M1 1l6 6M7 1L1 7" stroke="#fff" strokeWidth="1.800" /></svg>
            </span>
          </div>
        </div>

        <div className="h-[24px] shrink-0 bg-[#9d9d9d] border-t border-[#555] border-b border-b-[#777] flex items-center justify-end pr-[29px] font-['Liberation_Sans',sans-serif] text-[10.500px]">
          <span className="w-[16px] h-[13px] bg-white border-t border-[#ccc] mr-[7px]" />
          <span className="mr-[8px]">Workspace 0</span>
          <span className="w-[21px] h-[13px] bg-[#bdbdbd] border border-[#aaa] text-[8px] text-[#777] flex items-center justify-center mr-[1px]">◀</span>
          <span className="w-[21px] h-[13px] bg-[#bdbdbd] border border-[#aaa] text-[8px] text-[#777] flex items-center justify-center">▶</span>
        </div>
      </div>
    </div>
  );
}

function SmallStrip({ children }: { children: React.ReactNode }) {
  return <div className="w-[27px] h-[19px] border border-[#8f8f8f] border-t-white bg-[linear-gradient(#fafafa,#e2e2e2)] flex items-center justify-center">{children}</div>;
}

function Letter({ red }: { red?: boolean }) {
  return (
    <div className="w-[30px] flex items-center justify-center relative">
      <span className="font-['Liberation_Sans',sans-serif] font-bold text-[18px] text-[#2f6fc0] [-webkit-text-stroke:0.5px_#1c4f90] leading-none">A</span>
      <span className={`absolute left-[7px] top-[6px] w-[6px] h-[6px] ${red ? "bg-[#ef5a5e]" : "bg-[conic-gradient(#f55,#fd5,#5e5,#55f,#f5f,#f55)]"} rounded-[1px]`} />
    </div>
  );
}
